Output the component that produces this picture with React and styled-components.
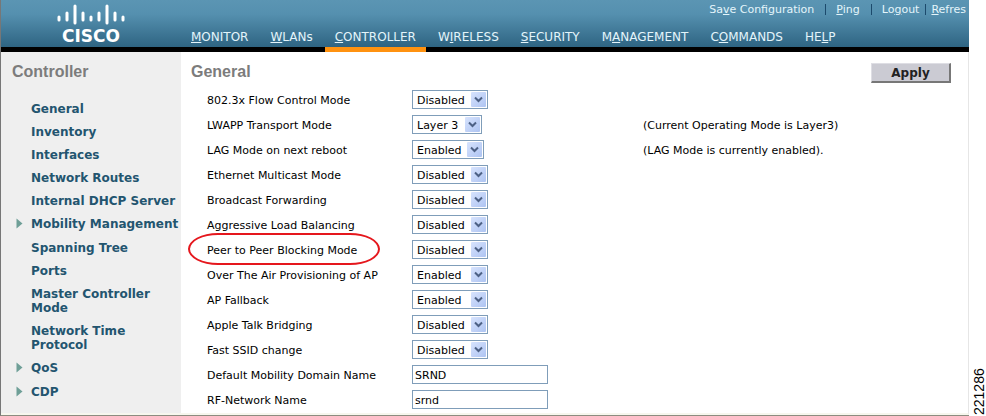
import {useId} from 'react';
import styled, {createGlobalStyle} from 'styled-components';

const colors = {
    link: '#23556f',
    heading: '#7c7c7c',
    field: '#7f9db9',
    orange: '#ff9210',
    side: '#efefef',
};

const fonts = {
    base: '"DejaVu Sans", sans-serif',
    title: '"Liberation Sans", Arial, sans-serif',
};

const GlobalStyle = createGlobalStyle`
  *, *::before, *::after {
    box-sizing: border-box;
  }

  body {
    margin: 0;
    background: #fff;
    color: #000;
    font-family: ${fonts.base};
    font-size: 11px;
    line-height: 14px;
  }
`;

const Page = styled.div`
  display: grid;
  grid-template-columns: minmax(0, 1fr) 17px;
  min-height: 100vh;
`;

const Frame = styled.div`
  display: flex;
  flex-direction: column;
  border-left: 1px solid #777;
  border-bottom: 1px solid #8c8c80;
  overflow: hidden;
`;

const Header = styled.header`
  display: grid;
  grid-template-columns: 180px minmax(0, 1fr);
  height: 52px;
  background: linear-gradient(#5b95b3, #5590af 30%, #2e6482) #000;
  border-bottom: 5px solid #000;
`;

const Brand = styled.div`
  display: flex;
  flex-direction: column;
  align-items: center;
  padding-top: 4px;
  color: #fff;
  font-size: 17px;
  font-weight: bold;
  line-height: 22px;

  svg {
    display: block;
  }
`;

const HeaderBody = styled.div`
  display: flex;
  flex-direction: column;
  justify-content: space-between;
`;

const Utility = styled.div`
  display: flex;
  justify-content: flex-end;
  white-space: nowrap;
  padding-top: 3px;
`;

const UtilityLink = styled.a`
  color: #e4f5fb;
  text-decoration: none;
  padding: 0 ${(props) => props.$end || 11}px 0 ${(props) => props.$start || 11}px;
  position: relative;

  &:not(:first-child)::before {
    content: '';
    position: absolute;
    left: 0;
    top: 1px;
    width: 1px;
    height: 11px;
    background: #1c4a6c;
  }
`;

const Nav = styled.nav`
  display: flex;
  gap: 2px;
`;

const NavLink = styled.a`
  height: 26px;
  margin-bottom: -5px;
  padding: 3px 10px 0;
  border-bottom: 5px solid ${(props) => (props.$active ? colors.orange : 'transparent')};
  color: #e4f5fb;
  font-size: 12px;
  line-height: 16px;
  text-decoration: none;
`;

const Body = styled.div`
  display: grid;
  grid-template-columns: 180px minmax(0, 1fr);
  flex: 1;
  border-right: 1px solid #e6e6e6;
  border-bottom: 2px solid #f7f7ee;
`;

const Sidebar = styled.aside`
  background: ${colors.side};
  padding: 10px 0 0 11px;
`;

const Title = styled.h1`
  margin: 0;
  color: ${colors.heading};
  font-family: ${fonts.title};
  font-size: 16px;
  line-height: 20px;
`;

const Menu = styled.ul`
  display: flex;
  flex-direction: column;
  gap: 9px;
  list-style: none;
  margin: 0;
  padding: 20px 0 0;
`;

const MenuItem = styled.li`
  display: grid;
  grid-template-columns: 19px 1fr;
  padding-bottom: ${(props) => (props.$parent ? 1 : 0)}px;

  svg {
    display: block;
    margin: 1px 0 0 4px;
  }
`;

const MenuLink = styled.a`
  grid-column: 2;
  color: ${colors.link};
  font-size: 12px;
  font-weight: bold;
  text-decoration: none;
  white-space: nowrap;
`;

const Main = styled.main`
  padding: 10px 17px 0 10px;
`;

const MainHead = styled.div`
  display: flex;
  justify-content: space-between;
  align-items: flex-start;
  height: 25px;
`;

const Apply = styled.button`
  width: 80px;
  height: 20px;
  margin-top: 1px;
  padding: 0;
  background: #cbcbd3;
  border: 1px solid #dedee4;
  border-right: 2px solid #777;
  border-bottom: 2px solid #777;
  color: #222;
  font: bold 12px/16px ${fonts.base};
`;

const Row = styled.div`
  display: grid;
  grid-template-columns: 205px 231px 1fr;
  align-items: center;
  height: 25px;
  padding-left: 16px;
`;

const Label = styled.label`
  position: relative;
  justify-self: start;
  padding-top: 2px;
  white-space: nowrap;
`;

const Note = styled.span`
  padding-top: 2px;
`;

const Ring = styled.span`
  position: absolute;
  inset: -9px -23px -7px -19px;
  border: 2px solid #e5171d;
  border-radius: 30px / 16px;
  pointer-events: none;
`;

const SelectBox = styled.div`
  position: relative;
  width: ${(props) => props.$width}px;

  svg {
    position: absolute;
    top: 2px;
    right: 2px;
    pointer-events: none;
  }
`;

const Select = styled.select`
  display: block;
  appearance: none;
  width: 100%;
  height: 19px;
  margin: 0;
  padding: 2px 0 0 4px;
  background: #fff;
  border: 1px solid ${colors.field};
  border-radius: 0;
  color: #000;
  font: 11px/14px ${fonts.base};
`;

const Input = styled.input`
  width: 136px;
  height: 19px;
  padding: 2px 2px 0;
  background: #fff;
  border: 1px solid ${colors.field};
  color: #000;
  font: 11px/14px ${fonts.base};
`;

const Gutter = styled.aside`
  display: flex;
  align-items: center;
  padding: 1px 2px 0 0;
  writing-mode: vertical-rl;
  transform: rotate(180deg);
  font-family: ${fonts.title};
  font-size: 14px;
  line-height: 14px;
`;

// [x, top, bottom] of each bar in the bridge mark
const bars = [
    [2, 12, 17], [10, 8, 17], [18, 1, 20], [26, 8, 17], [34, 12, 17],
    [42, 8, 17], [50, 1, 20], [58, 8, 17], [66, 12, 17],
];

const BridgeMark = () => (
    <svg width="68" height="21" viewBox="0 0 68 21" aria-hidden="true">
        <g stroke="#fff" strokeWidth="3" strokeLinecap="round">
            {bars.map(([x, top, bottom]) => (
                <line key={x} x1={x} y1={top + 1} x2={x} y2={bottom - 1} />
            ))}
        </g>
    </svg>
);

const Triangle = () => (
    <svg width="7" height="11" viewBox="0 0 7 11" aria-hidden="true">
        <path d="M0.5 0.5 L6.5 5.5 L0.5 10.5 Z" fill="#6f9f97" />
    </svg>
);

const Arrow = () => {
    const id = useId();
    return (
        <svg width="15" height="15" viewBox="0 0 15 15" aria-hidden="true">
            <defs>
                <linearGradient id={id} x1="0" y1="0" x2="1" y2="1">
                    <stop offset="0" stopColor="#d7e3fd" />
                    <stop offset="1" stopColor="#aec4f2" />
                </linearGradient>
            </defs>
            <rect width="15" height="15" rx="1" fill={`url(#${id})`} />
            <path d="M4 5.5 L7.5 9 L11 5.5" fill="none" stroke="#4d6185" strokeWidth="2" />
        </svg>
    );
};

// text with its access key underlined
const Hotkey = ({text, at}) => (
    <>
        {text.slice(0, at)}
        <u>{text[at]}</u>
        {text.slice(at + 1)}
    </>
);

const utility = [
    {text: 'Save Configuration', at: 2},
    {text: 'Ping', at: 0},
    {text: 'Logout', at: 2, end: 6},
    {text: 'Refres', at: 0, start: 6, end: 3},
];

const nav = [
    {text: 'MONITOR', at: 0},
    {text: 'WLANs', at: 0},
    {text: 'CONTROLLER', at: 0, active: true},
    {text: 'WIRELESS', at: 1},
    {text: 'SECURITY', at: 0},
    {text: 'MANAGEMENT', at: 1},
    {text: 'COMMANDS', at: 1},
    {text: 'HELP', at: 2},
];

const menu = [
    {lines: ['General']},
    {lines: ['Inventory']},
    {lines: ['Interfaces']},
    {lines: ['Network Routes']},
    {lines: ['Internal DHCP Server']},
    {lines: ['Mobility Management'], parent: true},
    {lines: ['Spanning Tree']},
    {lines: ['Ports']},
    {lines: ['Master Controller', 'Mode']},
    {lines: ['Network Time', 'Protocol']},
    {lines: ['QoS'], parent: true},
    {lines: ['CDP'], parent: true},
];

const settings = [
    {label: '802.3x Flow Control Mode', value: 'Disabled'},
    {label: 'LWAPP Transport Mode', value: 'Layer 3', options: ['Layer 2', 'Layer 3'], width: 70, note: '(Current Operating Mode is Layer3)'},
    {label: 'LAG Mode on next reboot', value: 'Enabled', width: 72, note: '(LAG Mode is currently enabled).'},
    {label: 'Ethernet Multicast Mode', value: 'Disabled'},
    {label: 'Broadcast Forwarding', value: 'Disabled'},
    {label: 'Aggressive Load Balancing', value: 'Disabled'},
    {label: 'Peer to Peer Blocking Mode', value: 'Disabled', ring: true},
    {label: 'Over The Air Provisioning of AP', value: 'Enabled'},
    {label: 'AP Fallback', value: 'Enabled'},
    {label: 'Apple Talk Bridging', value: 'Disabled'},
    {label: 'Fast SSID change', value: 'Disabled'},
    {label: 'Default Mobility Domain Name', value: 'SRND', input: true},
    {label: 'RF-Network Name', value: 'srnd', input: true},
];

const Setting = ({label, value, options = ['Enabled', 'Disabled'], width = 76, note, ring, input}) => {
    const id = useId();
    return (
        <Row>
            <Label htmlFor={id}>
                {label}
                {ring && <Ring />}
            </Label>
            {input ? (
                <Input id={id} type="text" defaultValue={value} />
            ) : (
                <SelectBox $width={width}>
                    <Select id={id} defaultValue={value}>
                        {options.map((option) => <option key={option}>{option}</option>)}
                    </Select>
                    <Arrow />
                </SelectBox>
            )}
            {note && <Note>{note}</Note>}
        </Row>
    );
};

const App = () => {
    return (
        <>
            <GlobalStyle />
            <Page>
                <Frame>
                    <Header>
                        <Brand>
                            <BridgeMark />
                            CISCO
                        </Brand>
                        <HeaderBody>
                            <Utility>
                                {utility.map(({text, at, start, end}) => (
                                    <UtilityLink key={text} href="#" $start={start} $end={end}>
                                        <Hotkey text={text} at={at} />
                                    </UtilityLink>
                                ))}
                            </Utility>
                            <Nav>
                                {nav.map(({text, at, active}) => (
                                    <NavLink key={text} href="#" $active={active}>
                                        <Hotkey text={text} at={at} />
                                    </NavLink>
                                ))}
                            </Nav>
                        </HeaderBody>
                    </Header>
                    <Body>
                        <Sidebar>
                            <Title as="h2">Controller</Title>
                            <Menu>
                                {menu.map(({lines, parent}) => (
                                    <MenuItem key={lines[0]} $parent={parent}>
                                        {parent && <Triangle />}
                                        <MenuLink href="#">
                                            {lines[0]}
                                            {lines[1] && <><br />{lines[1]}</>}
                                        </MenuLink>
                                    </MenuItem>
                                ))}
                            </Menu>
                        </Sidebar>
                        <Main>
                            <MainHead>
                                <Title>General</Title>
                                <Apply type="button">Apply</Apply>
                            </MainHead>
                            {settings.map((item) => <Setting key={item.label} {...item} />)}
                        </Main>
                    </Body>
                </Frame>
                <Gutter>221286</Gutter>
            </Page>
        </>
    );
};

export default App;
